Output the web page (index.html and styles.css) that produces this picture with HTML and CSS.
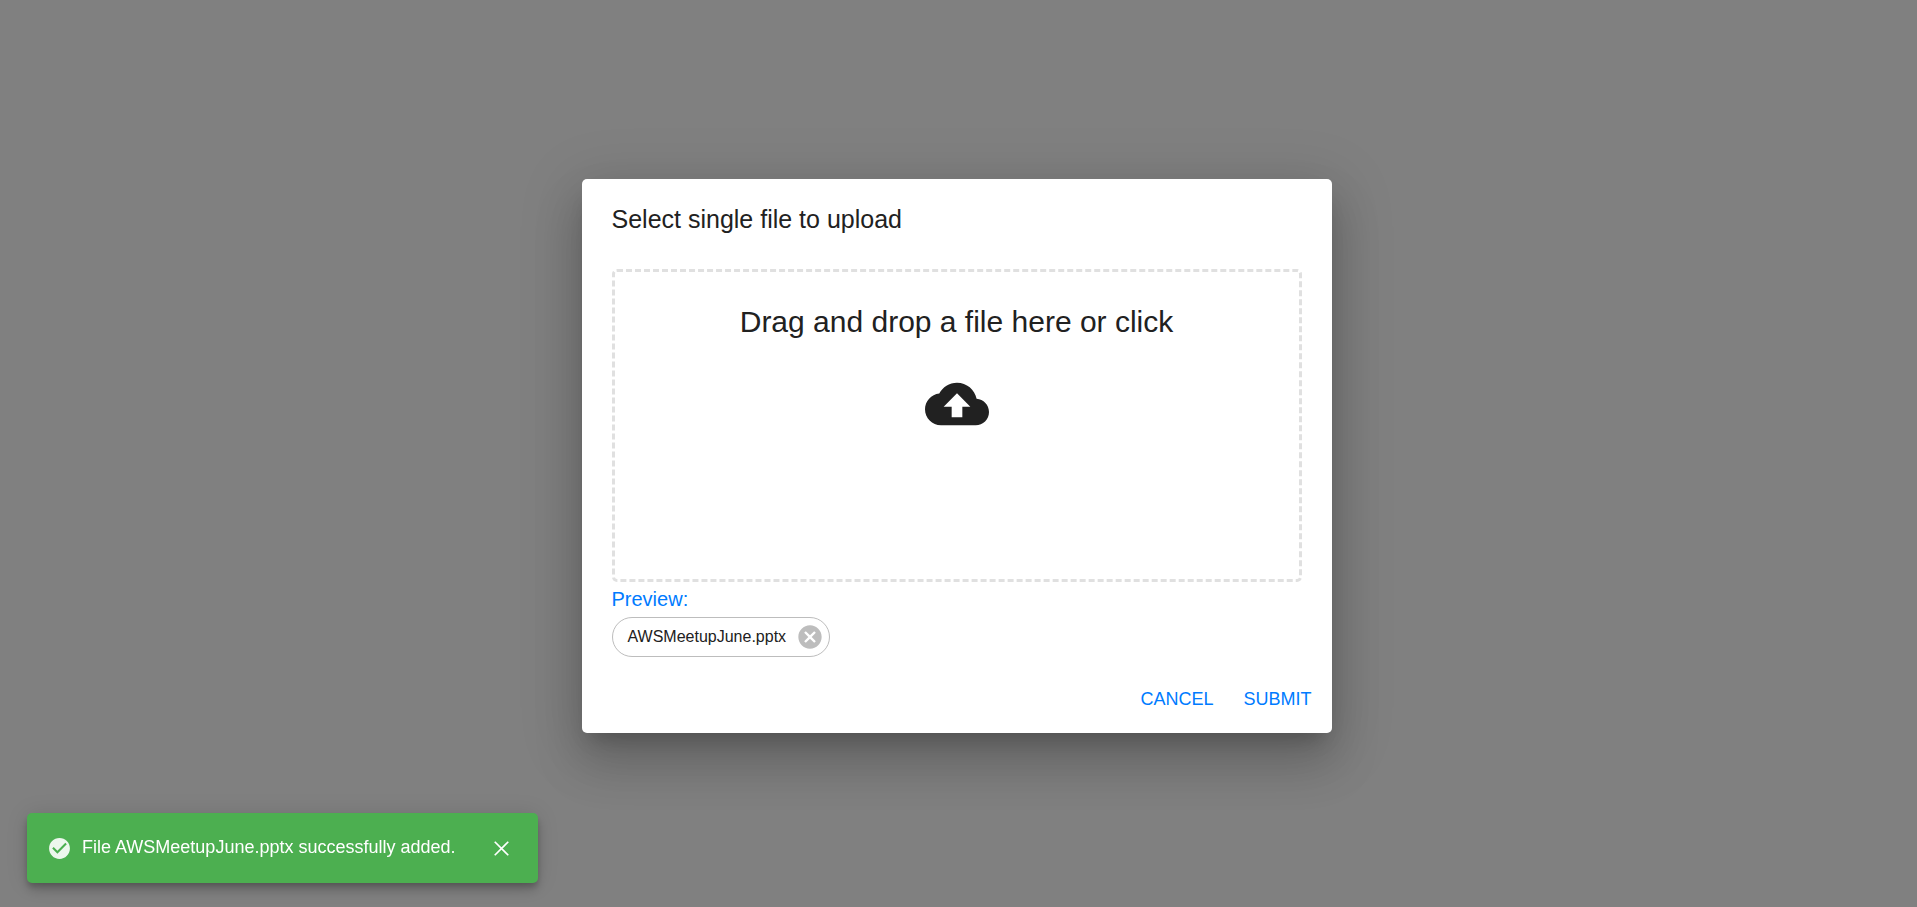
FILE: index.html
```
<!DOCTYPE html>
<html lang="en">
<head>
<meta charset="utf-8">
<meta name="viewport" content="width=device-width, initial-scale=1">
<title>Select single file to upload</title>
<link rel="stylesheet" href="styles.css">
</head>
<body>
<div class="backdrop">
  <section class="dialog" role="dialog" aria-modal="true" aria-labelledby="dialog-title">
    <h2 class="dialog-title" id="dialog-title">Select single file to upload</h2>
    <div class="dialog-content">
      <button class="dropzone" type="button">
        <span class="dropzone-text">Drag and drop a file here or click</span>
        <svg class="dropzone-icon" viewBox="0 0 24 24" aria-hidden="true"><path d="M19.35 10.04C18.67 6.59 15.64 4 12 4 9.11 4 6.6 5.64 5.35 8.04 2.34 8.36 0 10.91 0 14c0 3.31 2.69 6 6 6h13c2.76 0 5-2.24 5-5 0-2.64-2.05-4.78-4.65-4.96zM14 13v4h-4v-4H7l5-5 5 5h-3z"/></svg>
      </button>
      <p class="preview-label">Preview:</p>
      <div class="chip">
        <span class="chip-label">AWSMeetupJune.pptx</span>
        <button class="chip-delete" type="button" aria-label="Remove AWSMeetupJune.pptx">
          <svg viewBox="0 0 24 24" aria-hidden="true"><path d="M12 2C6.47 2 2 6.47 2 12s4.47 10 10 10 10-4.47 10-10S17.53 2 12 2zm5 13.59L15.59 17 12 13.41 8.41 17 7 15.59 10.59 12 7 8.41 8.41 7 12 10.59 15.59 7 17 8.41 13.41 12 17 15.59z"/></svg>
        </button>
      </div>
    </div>
    <div class="dialog-actions">
      <button class="text-button" type="button">CANCEL</button>
      <button class="text-button" type="button">SUBMIT</button>
    </div>
  </section>
</div>
<div class="snackbar" role="status">
  <svg class="snackbar-icon" viewBox="0 0 24 24" aria-hidden="true"><path d="M12 2C6.48 2 2 6.48 2 12s4.48 10 10 10 10-4.48 10-10S17.52 2 12 2zm-2 15l-5-5 1.41-1.41L10 14.17l7.59-7.59L19 8l-9 9z"/></svg>
  <span class="snackbar-text">File AWSMeetupJune.pptx successfully added.</span>
  <button class="snackbar-close" type="button" aria-label="Close">
    <svg viewBox="0 0 24 24" aria-hidden="true"><path d="M5.5 5.5l13 13M18.5 5.5l-13 13"/></svg>
  </button>
</div>
</body>
</html>
```
FILE: styles.css
```
* {
  box-sizing: border-box;
}

body {
  margin: 0;
  font-family: "Liberation Sans", Arial, sans-serif;
  color: #212121;
}

button {
  margin: 0;
  padding: 0;
  border: 0;
  background: none;
  color: inherit;
  font: inherit;
  cursor: pointer;
}

svg {
  display: block;
  fill: currentColor;
}

.backdrop {
  display: flex;
  align-items: center;
  justify-content: center;
  min-height: 100vh;
  padding: 40px 44px 40px 40px;
  background: #808080;
}

.dialog {
  width: 100%;
  max-width: 750px;
  margin-bottom: -4px;
  border-radius: 5px;
  background: #fff;
  box-shadow: 0 14px 19px -9px rgba(0, 0, 0, 0.2),
    0 30px 48px 4px rgba(0, 0, 0, 0.14),
    0 11px 58px 10px rgba(0, 0, 0, 0.12);
}

.dialog-title {
  margin: 0;
  padding: 20px 30px;
  font-size: 25px;
  font-weight: 400;
  line-height: 40px;
}

.dialog-content {
  padding: 10px 30px;
}

.dropzone {
  display: flex;
  flex-direction: column;
  align-items: center;
  gap: 30px;
  width: 100%;
  min-height: 313px;
  padding: 30px;
  border: 3px dashed #e0e0e0;
  border-radius: 5px;
}

.dropzone-text {
  font-size: 30px;
  line-height: 40px;
}

.dropzone-icon {
  width: 64px;
  height: 64px;
}

.preview-label {
  margin: 0;
  color: #007bff;
  font-size: 20px;
  line-height: 35px;
}

.chip {
  display: inline-flex;
  align-items: center;
  gap: 10px;
  height: 40px;
  padding: 0 5px 0 15px;
  border: 1px solid #bdbdbd;
  border-radius: 20px;
  vertical-align: top;
}

.chip-label {
  font-size: 16px;
}

.chip-delete {
  width: 28px;
  height: 28px;
  color: #bdbdbd;
}

.dialog-actions {
  display: flex;
  justify-content: flex-end;
  gap: 10px;
  padding: 10px;
}

.text-button {
  padding: 7px 10px 9px;
  border-radius: 5px;
  color: #007bff;
  font-size: 18px;
  line-height: 30px;
}

.snackbar {
  position: fixed;
  bottom: 24px;
  left: 27px;
  display: flex;
  align-items: center;
  gap: 10px;
  min-width: 511px;
  padding: 10px 12px 10px 20px;
  border-radius: 5px;
  background: #4caf50;
  color: #fff;
  box-shadow: 0 4px 6px -1px rgba(0, 0, 0, 0.2),
    0 8px 12px rgba(0, 0, 0, 0.14),
    0 1px 22px rgba(0, 0, 0, 0.12);
}

.snackbar-icon {
  width: 25px;
  height: 25px;
  opacity: 0.9;
}

.snackbar-text {
  padding-bottom: 2px;
  font-size: 18px;
}

.snackbar-close {
  display: grid;
  place-items: center;
  width: 50px;
  height: 50px;
  margin-left: auto;
}

.snackbar-close svg {
  width: 25px;
  height: 25px;
  stroke: currentColor;
  stroke-width: 1.6;
}
```
